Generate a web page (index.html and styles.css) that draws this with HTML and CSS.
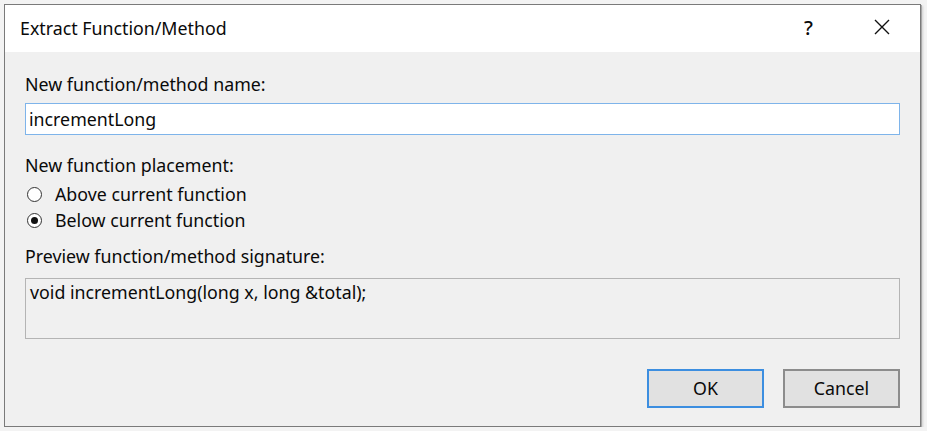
FILE: index.html
```html
<!DOCTYPE html>
<html>
<head>
<meta charset="utf-8">
<link rel="stylesheet" href="styles.css">
</head>
<body>
<div class="window">
  <div class="titlebar">
    <span class="title">Extract Function/Method</span>
    <span class="help">?</span>
    <span class="close">
      <svg width="16" height="16" viewBox="0 0 16 16"><path d="M1 1 L15 15 M15 1 L1 15" stroke="#111" stroke-width="1.4" fill="none"/></svg>
    </span>
  </div>
  <div class="content">
    <div class="label l1">New function/method name:</div>
    <div class="input">incrementLong</div>
    <div class="label l2">New function placement:</div>
    <div class="radio r1"><span class="circle"></span><span>Above current function</span></div>
    <div class="radio r2"><span class="circle checked"></span><span>Below current function</span></div>
    <div class="label l3">Preview function/method signature:</div>
    <div class="preview">void incrementLong(long x, long &amp;total);</div>
    <div class="buttons">
      <div class="btn ok">OK</div>
      <div class="btn cancel">Cancel</div>
    </div>
  </div>
</div>
</body>
</html>
```

FILE: styles.css
```css
html, body {
  margin: 0;
  padding: 0;
  background: #f3f3f3;
}
body {
  padding: 4px 0 0 4px;
  font-family: "Noto Sans", "Open Sans", sans-serif;
  font-size: 17.8px;
  color: #0a0a0a;
}
.window {
  width: 915px;
  height: 421px;
  border: 1px solid #7a7a7a;
  box-shadow: 1px 1px 0 #a8a8a8, 2px 2px 2px rgba(0,0,0,0.15);
  background: #f0f0f0;
  display: flex;
  flex-direction: column;
}
.titlebar {
  height: 47px;
  background: #fff;
  display: flex;
  align-items: center;
  padding-left: 15px;
}
.title {
  flex: 1;
  line-height: 24px;
  margin-top: -2px;
}
.help {
  width: 20px;
  margin-right: 50px;
  font-size: 20px;
  font-weight: 500;
  margin-top: -3px;
}
.close {
  display: flex;
  margin-right: 30px;
  margin-top: -4px;
}
.content {
  flex: 1;
  padding: 0 20px 0 20px;
  display: flex;
  flex-direction: column;
}
.label {
  line-height: 24px;
  height: 24px;
}
.l1 { margin-top: 20px; }
.input {
  margin-top: 7px;
  height: 30px;
  border: 1px solid #7eb4ea;
  background: #fff;
  line-height: 30px;
  padding-left: 3px;
}
.l2 { margin-top: 18px; }
.radio {
  display: flex;
  align-items: center;
  height: 26px;
  line-height: 24px;
}
.r1 { margin-top: 4px; }
.circle {
  width: 13px;
  height: 13px;
  border: 1px solid #333;
  border-radius: 50%;
  background: #fff;
  margin-left: 2px;
  margin-right: 13px;
  display: flex;
  align-items: center;
  justify-content: center;
}
.circle.checked::after {
  content: "";
  width: 7px;
  height: 7px;
  border-radius: 50%;
  background: #111;
}
.l3 { margin-top: 11px; }
.preview {
  margin-top: 10px;
  border: 1px solid #b4b4b4;
  padding: 1px 4px;
  line-height: 24px;
  box-sizing: border-box;
  height: 61px;
}
.buttons {
  margin-top: 30px;
  display: flex;
  justify-content: flex-end;
  gap: 19px;
}
.btn {
  width: 113px;
  height: 35px;
  line-height: 35px;
  text-align: center;
  background: #e1e1e1;
  border: 2px solid #8c8c8c;
}
.btn.ok {
  border-color: #3c8ee0;
}
```
